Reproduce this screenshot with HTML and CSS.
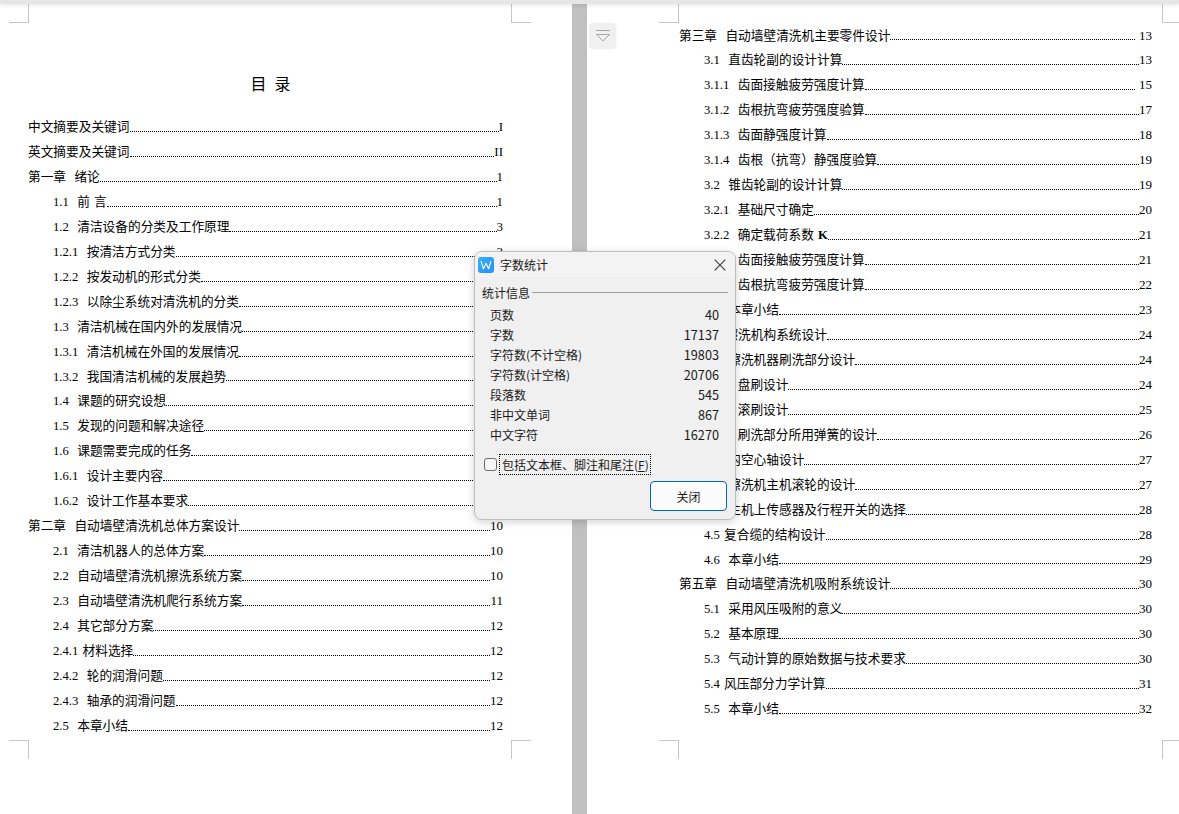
FILE: index.html
```html
<!DOCTYPE html>
<html lang="zh-CN">
<head>
<meta charset="utf-8">
<title>字数统计</title>
<link rel="stylesheet" href="styles.css">
</head>
<body>
<div class="topbar"></div>
<main class="viewer">
  <section class="page page-left">
    <i class="crop tl"></i><i class="crop tr"></i><i class="crop bl"></i><i class="crop br"></i>
    <h1 class="toc-title">目&nbsp;&nbsp;录</h1>
    <ol class="toc">
      <li class="row"><span>中文摘要及关键词</span><b class="dots"></b><em>I</em></li>
      <li class="row"><span>英文摘要及关键词</span><b class="dots"></b><em>II</em></li>
      <li class="row"><span>第一章  绪论</span><b class="dots"></b><em>1</em></li>
      <li class="row sub"><span>1.1  前 言</span><b class="dots"></b><em>1</em></li>
      <li class="row sub"><span>1.2  清洁设备的分类及工作原理</span><b class="dots"></b><em>3</em></li>
      <li class="row sub"><span>1.2.1  按清洁方式分类</span><b class="dots"></b><em>3</em></li>
      <li class="row sub"><span>1.2.2  按发动机的形式分类</span><b class="dots"></b><em>3</em></li>
      <li class="row sub"><span>1.2.3  以除尘系统对清洗机的分类</span><b class="dots"></b><em>4</em></li>
      <li class="row sub"><span>1.3  清洁机械在国内外的发展情况</span><b class="dots"></b><em>4</em></li>
      <li class="row sub"><span>1.3.1  清洁机械在外国的发展情况</span><b class="dots"></b><em>4</em></li>
      <li class="row sub"><span>1.3.2  我国清洁机械的发展趋势</span><b class="dots"></b><em>6</em></li>
      <li class="row sub"><span>1.4  课题的研究设想</span><b class="dots"></b><em>7</em></li>
      <li class="row sub"><span>1.5  发现的问题和解决途径</span><b class="dots"></b><em>8</em></li>
      <li class="row sub"><span>1.6  课题需要完成的任务</span><b class="dots"></b><em>9</em></li>
      <li class="row sub"><span>1.6.1  设计主要内容</span><b class="dots"></b><em>9</em></li>
      <li class="row sub"><span>1.6.2  设计工作基本要求</span><b class="dots"></b><em>9</em></li>
      <li class="row"><span>第二章  自动墙壁清洗机总体方案设计</span><b class="dots"></b><em>10</em></li>
      <li class="row sub"><span>2.1  清洁机器人的总体方案</span><b class="dots"></b><em>10</em></li>
      <li class="row sub"><span>2.2  自动墙壁清洗机擦洗系统方案</span><b class="dots"></b><em>10</em></li>
      <li class="row sub"><span>2.3  自动墙壁清洗机爬行系统方案</span><b class="dots"></b><em>11</em></li>
      <li class="row sub"><span>2.4  其它部分方案</span><b class="dots"></b><em>12</em></li>
      <li class="row sub"><span>2.4.1 材料选择</span><b class="dots"></b><em>12</em></li>
      <li class="row sub"><span>2.4.2  轮的润滑问题</span><b class="dots"></b><em>12</em></li>
      <li class="row sub"><span>2.4.3  轴承的润滑问题</span><b class="dots"></b><em>12</em></li>
      <li class="row sub"><span>2.5  本章小结</span><b class="dots"></b><em>12</em></li>
    </ol>
  </section>

  <div class="gutter"></div>

  <section class="page page-right">
    <i class="crop tl"></i><i class="crop tr"></i><i class="crop bl"></i><i class="crop br"></i>
    <button class="fold" type="button" aria-label="收起">
      <svg width="16" height="12" viewBox="0 0 16 12"><path d="M1 .5h14M1.5 4.5h13L8 11z" fill="none" stroke="#a6a6a6"/></svg>
    </button>
    <ol class="toc">
      <li class="row"><span>第三章  自动墙壁清洗机主要零件设计</span><b class="dots"></b><em class="far">13</em></li>
      <li class="row sub"><span>3.1  直齿轮副的设计计算</span><b class="dots"></b><em>13</em></li>
      <li class="row sub"><span>3.1.1  齿面接触疲劳强度计算</span><b class="dots"></b><em class="far">15</em></li>
      <li class="row sub"><span>3.1.2  齿根抗弯疲劳强度验算</span><b class="dots"></b><em>17</em></li>
      <li class="row sub"><span>3.1.3  齿面静强度计算</span><b class="dots"></b><em>18</em></li>
      <li class="row sub"><span>3.1.4  齿根（抗弯）静强度验算</span><b class="dots"></b><em>19</em></li>
      <li class="row sub"><span>3.2  锥齿轮副的设计计算</span><b class="dots"></b><em>19</em></li>
      <li class="row sub"><span>3.2.1  基础尺寸确定</span><b class="dots"></b><em>20</em></li>
      <li class="row sub"><span>3.2.2  确定载荷系数 <strong>K</strong></span><b class="dots"></b><em>21</em></li>
      <li class="row sub"><span>3.2.3  齿面接触疲劳强度计算</span><b class="dots"></b><em>21</em></li>
      <li class="row sub"><span>3.2.4  齿根抗弯疲劳强度计算</span><b class="dots"></b><em>22</em></li>
      <li class="row sub"><span>3.3  本章小结</span><b class="dots"></b><em>23</em></li>
      <li class="row"><span>第四章  擦洗机构系统设计</span><b class="dots"></b><em>24</em></li>
      <li class="row sub"><span>4.1  擦洗机器刷洗部分设计</span><b class="dots"></b><em>24</em></li>
      <li class="row sub"><span>4.1.1  盘刷设计</span><b class="dots"></b><em>24</em></li>
      <li class="row sub"><span>4.1.2  滚刷设计</span><b class="dots"></b><em>25</em></li>
      <li class="row sub"><span>4.1.3  刷洗部分所用弹簧的设计</span><b class="dots"></b><em>26</em></li>
      <li class="row sub"><span>4.2  内空心轴设计</span><b class="dots"></b><em>27</em></li>
      <li class="row sub"><span>4.3  擦洗机主机滚轮的设计</span><b class="dots"></b><em>27</em></li>
      <li class="row sub"><span>4.4  主机上传感器及行程开关的选择</span><b class="dots"></b><em>28</em></li>
      <li class="row sub"><span>4.5 复合缆的结构设计</span><b class="dots"></b><em>28</em></li>
      <li class="row sub"><span>4.6  本章小结</span><b class="dots"></b><em>29</em></li>
      <li class="row"><span>第五章  自动墙壁清洗机吸附系统设计</span><b class="dots"></b><em>30</em></li>
      <li class="row sub"><span>5.1  采用风压吸附的意义</span><b class="dots"></b><em>30</em></li>
      <li class="row sub"><span>5.2  基本原理</span><b class="dots"></b><em>30</em></li>
      <li class="row sub"><span>5.3  气动计算的原始数据与技术要求</span><b class="dots"></b><em>30</em></li>
      <li class="row sub"><span>5.4 风压部分力学计算</span><b class="dots"></b><em>31</em></li>
      <li class="row sub"><span>5.5  本章小结</span><b class="dots"></b><em>32</em></li>
    </ol>
  </section>
</main>

<aside class="dialog" role="dialog">
  <header class="dlg-head">
    <svg class="dlg-logo" width="16" height="16" viewBox="0 0 16 16">
      <defs><linearGradient id="wps" x1="0" y1="0" x2="1" y2="1"><stop offset="0" stop-color="#35b0f7"/><stop offset="1" stop-color="#2a90f0"/></linearGradient></defs>
      <rect width="16" height="16" rx="3" fill="url(#wps)"/>
      <path d="M3 4.2l2.4 7.6L8 6.2l2.6 5.6L13 4.2" fill="none" stroke="#fff" stroke-width="1.1" stroke-linejoin="round"/>
    </svg>
    <span class="dlg-title">字数统计</span>
    <svg class="dlg-close" width="12" height="12" viewBox="0 0 12 12"><path d="M.7.7l10.6 10.6M11.3.7L.7 11.3" stroke="#3a3a3a" stroke-width="1.1" fill="none"/></svg>
  </header>
  <div class="dlg-body">
    <div class="legend"><span>统计信息</span><hr></div>
    <dl class="stats">
      <dt>页数</dt><dd>40</dd>
      <dt>字数</dt><dd>17137</dd>
      <dt>字符数(不计空格)</dt><dd>19803</dd>
      <dt>字符数(计空格)</dt><dd>20706</dd>
      <dt>段落数</dt><dd>545</dd>
      <dt>非中文单词</dt><dd>867</dd>
      <dt>中文字符</dt><dd>16270</dd>
    </dl>
    <div class="check"><i class="box"></i><span class="check-label">包括文本框、脚注和尾注(<u>F</u>)</span></div>
    <div class="dlg-foot"><button class="close-btn" type="button">关闭</button></div>
  </div>
</aside>
</body>
</html>
```

FILE: styles.css
```css
* { box-sizing: border-box; }
html, body { margin: 0; height: 100%; overflow: hidden; background: #fff; }
body { position: relative; font-family: "Liberation Serif", "Noto Sans CJK SC", serif; color: #000; }

.topbar {
  height: 4px;
  background: #e6e6e6;
  box-shadow: 0 1px 4px rgba(0, 0, 0, .12);
  position: relative;
  z-index: 2;
}
.viewer { display: flex; height: 810px; }
.page { position: relative; background: #fff; }
.page-left { width: 572px; padding: 0 69px 0 28px; }
.page-right { flex: 1; padding: 19.5px 27px 0 92px; }
.gutter { width: 15px; background: #c0c0c0; }

.toc-title {
  margin: 0;
  padding: 69px 0 0 10px;
  height: 111px;
  text-align: center;
  font: 400 16px/21px "Noto Sans CJK SC", sans-serif;
  word-spacing: .5px;
}
.toc { list-style: none; margin: 0; padding: 0; }
.row {
  display: flex;
  height: 24.96px;
  line-height: 24.96px;
  font-size: 12.7px;
  word-spacing: 1px;
  white-space: pre;
}
.row.sub { padding-left: 25px; }
.row strong { font-weight: 700; }
.dots {
  flex: 1;
  align-self: flex-end;
  margin-bottom: 8px;
  border-bottom: 1px dotted #000;
}
.row em { font-style: normal; font-size: 13px; }
.row em.far { margin-left: 4px; }

.crop { position: absolute; width: 20px; height: 19px; border: 0 solid #c6c6c6; }
.crop.tl { top: 0; left: 9px; border-width: 0 1px 1px 0; }
.crop.tr { top: 0; left: 511px; border-width: 0 0 1px 1px; }
.crop.bl { top: 736px; left: 9px; border-width: 1px 1px 0 0; }
.crop.br { top: 736px; left: 511px; border-width: 1px 0 0 1px; }
.page-right .crop.tl { left: 72px; }
.page-right .crop.tr { left: 575px; }
.page-right .crop.bl { left: 72px; }
.page-right .crop.br { left: 575px; }

.fold {
  position: absolute;
  top: 19px;
  left: 2px;
  width: 27px;
  height: 26px;
  padding: 0;
  border: 0;
  border-radius: 4px;
  background: #f0f0f0;
  box-shadow: 0 0 3px rgba(0, 0, 0, .06);
  display: flex;
  align-items: center;
  justify-content: center;
}

.dialog {
  position: absolute;
  left: 474px;
  top: 251px;
  width: 262px;
  height: 269px;
  background: #f0f0f0;
  border: 1px solid #bdbdbd;
  border-radius: 8px;
  box-shadow: 0 2px 8px rgba(0, 0, 0, .18);
  overflow: hidden;
  font-family: "Noto Sans CJK SC", sans-serif;
  font-size: 12px;
  color: #1a1a1a;
  z-index: 5;
}
.dlg-head {
  display: flex;
  align-items: center;
  height: 25px;
  padding: 0 9px 0 3px;
  background: #f3f3f3;
}
.dlg-title { margin-left: 6px; flex: 1; }
.dlg-body { padding: 6px 7px 0; }
.legend { display: flex; align-items: center; height: 18px; gap: 2px; }
.legend hr { flex: 1; margin: 0; border: 0; border-top: 1px solid #a0a0a0; }
.stats {
  display: grid;
  grid-template-columns: 1fr auto;
  grid-auto-rows: 20px;
  align-items: center;
  margin: 4px 9px 0 8px;
}
.stats dt, .stats dd { margin: 0; line-height: 20px; }
.stats dd { text-align: right; font-size: 12.7px; }
.check { display: flex; align-items: center; gap: 2px; margin: 9px 0 0 2px; height: 21px; }
.box { width: 13px; height: 13px; border: 1px solid #6b6b6b; border-radius: 3px; background: #f7f7f7; }
.check-label {
  height: 21px;
  line-height: 19px;
  padding: 0 1px 0 2px;
  border: 1px dotted #000;
}
.dlg-foot { display: flex; justify-content: flex-end; margin: 6px 1px 0 0; }
.close-btn {
  width: 77px;
  height: 30px;
  padding: 0;
  background: #fbfbfb;
  border: 1px solid #0067c0;
  border-radius: 4px;
  font: 12px "Noto Sans CJK SC", sans-serif;
  color: #1a1a1a;
}
```
